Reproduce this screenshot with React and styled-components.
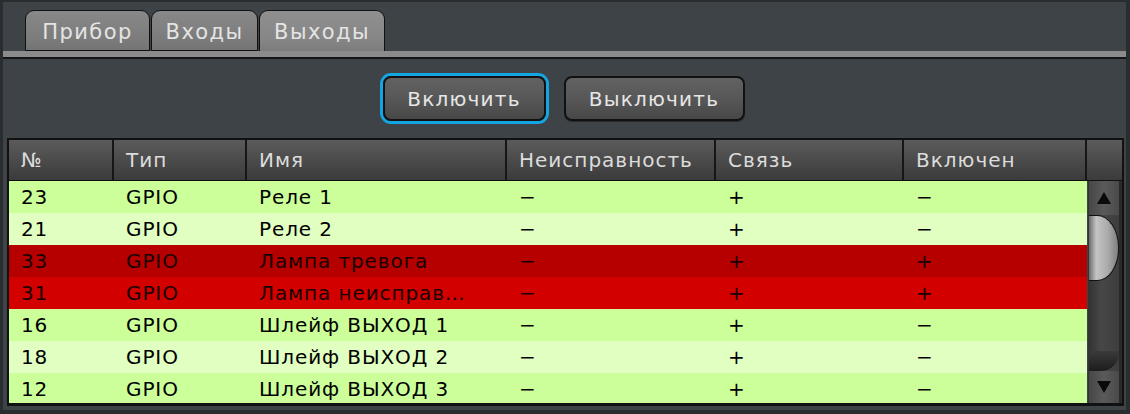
import React from "react";
import styled, { createGlobalStyle } from "styled-components";

const Global = createGlobalStyle`
  html, body {
    margin: 0;
    padding: 0;
    background: #3e4348;
  }
  body {
    font-family: "DejaVu Sans", "Liberation Sans", sans-serif;
  }
`;

const Window = styled.div`
  width: 1130px;
  height: 414px;
  box-sizing: border-box;
  background: #3e4348;
  border-left: 3px solid #2a2d30;
  border-right: 4px solid #2a2d30;
  border-top: 2px solid #2a2d30;
  border-bottom: 4px solid #2a2d30;
  display: flex;
  flex-direction: column;
  overflow: hidden;
`;

const TabBar = styled.div`
  display: flex;
  padding: 8px 0 0 22px;
  gap: 1px;
  height: 49px;
  box-sizing: border-box;
`;

const Tab = styled.div`
  width: ${(p) => p.w}px;
  height: 41px;
  box-sizing: border-box;
  display: flex;
  align-items: center;
  justify-content: center;
  padding-top: 2px;
  font-size: 21px;
  letter-spacing: 1.4px;
  color: #e4e4e4;
  border: 1px solid #111;
  border-bottom: ${(p) => (p.active ? "none" : "1px solid #111")};
  border-radius: 9px 9px 0 0;
  background: ${(p) =>
    p.active
      ? "linear-gradient(#8f8f8f, #868686 70%, #7c7c7c)"
      : "linear-gradient(#888, #7c7c7c 70%, #747474)"};
`;

const Band = styled.div`
  height: 6px;
  background: #8b8b8b;
  border-bottom: 2px solid #151515;
`;

const Actions = styled.div`
  display: flex;
  justify-content: center;
  align-items: center;
  gap: 18px;
  height: 79px;
  padding-right: 2px;
`;

const Button = styled.div`
  width: ${(p) => p.w}px;
  height: 45px;
  box-sizing: border-box;
  display: flex;
  align-items: center;
  justify-content: center;
  font-size: 20px;
  letter-spacing: 1.2px;
  color: #e6e6e6;
  border-radius: 8px;
  border: 2px solid #111;
  background: linear-gradient(#626262, #565656 55%, #474747);
  box-shadow: ${(p) => (p.focused ? "0 0 0 3px #14a6e2" : "0 1px 0 #2a2a2a")};
`;

const Table = styled.div`
  margin-left: 4px;
  width: 1117px;
  border: 2px solid #111;
  border-bottom-width: 3px;
  box-sizing: border-box;
  display: flex;
  flex-direction: column;
`;

const cols = "105px 133px 260px 209px 188px 183px";

const HeadRow = styled.div`
  display: grid;
  grid-template-columns: ${cols} 1fr;
  height: 40px;
  border-bottom: 1px solid #111;
  background: linear-gradient(#5b5b5b, #4b4b4b 50%, #3b3b3b);
`;

const HeadCell = styled.div`
  display: flex;
  align-items: center;
  padding-left: 12px;
  font-size: 20px;
  letter-spacing: 1px;
  color: #dcdcdc;
  border-right: 2px solid #161616;
  &:last-child {
    border-right: none;
  }
`;

const Body = styled.div`
  display: flex;
  height: 222px;
  overflow: hidden;
`;

const Rows = styled.div`
  width: 1078px;
`;

const Row = styled.div`
  display: grid;
  grid-template-columns: ${cols};
  height: 32px;
  background: ${(p) => p.bg};
`;

const Cell = styled.div`
  display: flex;
  align-items: center;
  padding-left: 12px;
  font-size: 20px;
  letter-spacing: 0.9px;
  color: ${(p) => (p.dark ? "#160000" : "#000")};
  white-space: nowrap;
  overflow: hidden;
`;

const Scroll = styled.div`
  width: 33px;
  margin-left: 1px;
  display: flex;
  flex-direction: column;
  background: linear-gradient(90deg, #3a3a3a, #4a4a4a 50%, #3f3f3f);
  border-left: 1px solid #333;
  border-right: 3px solid #2a2a2a;
`;

const Arrow = styled.div`
  height: ${(p) => p.h}px;
  display: flex;
  align-items: center;
  justify-content: center;
  background: linear-gradient(90deg, #474747, #5a5a5a 50%, #4a4a4a);
`;

const Track = styled.div`
  flex: 1;
  position: relative;
  background: linear-gradient(90deg, #333, #474747 40%, #3d3d3d);
`;

const Thumb = styled.div`
  position: absolute;
  left: 0;
  right: 0;
  top: 0;
  height: 64px;
  border: 1px solid #111;
  border-left: none;
  border-radius: 0 22px 22px 0 / 0 32px 32px 0;
  background: linear-gradient(90deg, #6c6c6c, #c4c4c4 25%, #aaa 65%, #7e7e7e);
`;

const TrackEnd = styled.div`
  position: absolute;
  left: 0;
  right: 0;
  bottom: 0;
  height: 20px;
  border-radius: 0 0 18px 0;
  background: linear-gradient(#3a3a3a, #1d1d1d);
`;

const rows = [
  { n: "23", t: "GPIO", name: "Реле 1", f: "−", c: "+", on: "−", bg: "#ccff99" },
  { n: "21", t: "GPIO", name: "Реле 2", f: "−", c: "+", on: "−", bg: "#e0ffc0" },
  { n: "33", t: "GPIO", name: "Лампа тревога", f: "−", c: "+", on: "+", bg: "#b60000", dark: true },
  { n: "31", t: "GPIO", name: "Лампа неисправ…", f: "−", c: "+", on: "+", bg: "#d30000", dark: true },
  { n: "16", t: "GPIO", name: "Шлейф ВЫХОД 1", f: "−", c: "+", on: "−", bg: "#ccff99" },
  { n: "18", t: "GPIO", name: "Шлейф ВЫХОД 2", f: "−", c: "+", on: "−", bg: "#e0ffc0" },
  { n: "12", t: "GPIO", name: "Шлейф ВЫХОД 3", f: "−", c: "+", on: "−", bg: "#ccff99" },
];

const headers = ["№", "Тип", "Имя", "Неисправность", "Связь", "Включен", ""];

const Tri = ({ up }) => (
  <svg width="16" height="14" viewBox="0 0 16 14">
    <path d={up ? "M8 1 L15 13 L1 13 Z" : "M1 1 L15 1 L8 13 Z"} fill="#0a0a0a" />
  </svg>
);

export default function App() {
  return (
    <Window>
      <Global />
      <TabBar>
        <Tab w={125}>Прибор</Tab>
        <Tab w={107}>Входы</Tab>
        <Tab w={126} active>
          Выходы
        </Tab>
      </TabBar>
      <Band />
      <Actions>
        <Button w={163} focused>
          Включить
        </Button>
        <Button w={181}>Выключить</Button>
      </Actions>
      <Table>
        <HeadRow>
          {headers.map((h, i) => (
            <HeadCell key={i}>{h}</HeadCell>
          ))}
        </HeadRow>
        <Body>
          <Rows>
            {rows.map((r) => (
              <Row key={r.n} bg={r.bg}>
                <Cell dark={r.dark}>{r.n}</Cell>
                <Cell dark={r.dark}>{r.t}</Cell>
                <Cell dark={r.dark}>{r.name}</Cell>
                <Cell dark={r.dark}>{r.f}</Cell>
                <Cell dark={r.dark}>{r.c}</Cell>
                <Cell dark={r.dark}>{r.on}</Cell>
              </Row>
            ))}
          </Rows>
          <Scroll>
            <Arrow h={34}>
              <Tri up />
            </Arrow>
            <Track>
              <Thumb />
              <TrackEnd />
            </Track>
            <Arrow h={32}>
              <Tri />
            </Arrow>
          </Scroll>
        </Body>
      </Table>
    </Window>
  );
}
